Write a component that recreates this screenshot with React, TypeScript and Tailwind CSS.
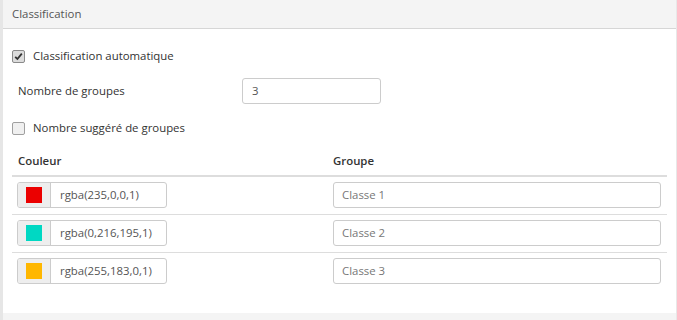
import React from "react";

const font = { fontFamily: '"Segoe UI", "Open Sans", "Noto Sans", sans-serif' };

function Check({ checked }: { checked: boolean }) {
  return (
    <div
      className={
        "w-[13px] h-[13px] rounded-[2px] border flex items-center justify-center " +
        (checked ? "border-[#8a8a8a] bg-[#dcdcdc]" : "border-[#a0a0a0] bg-[#f0f0f0]")
      }
    >
      {checked && (
        <svg width="9" height="9" viewBox="0 0 9 9">
          <path d="M1.2 4.8 L3.4 7 L7.8 1.6" fill="none" stroke="#333" strokeWidth="1.8" />
        </svg>
      )}
    </div>
  );
}

const rows = [
  { c: "rgba(235,0,0,1)", bg: "bg-[#eb0000]", g: "Classe 1" },
  { c: "rgba(0,216,195,1)", bg: "bg-[#00d8c3]", g: "Classe 2" },
  { c: "rgba(255,183,0,1)", bg: "bg-[#ffb700]", g: "Classe 3" },
];

export default function App() {
  return (
    <div className="w-[677px] h-[320px] bg-white flex text-[11.4px] text-[#333]" style={font}>
      <div className="w-[3px] bg-[#e6e6e6]" />
      <div className="flex-1 flex flex-col border-r border-[#e8e8e8]">
        <div className="h-[29px] bg-[#f4f4f4] border-b border-[#d6d6d6] pl-[9px] flex items-center text-[#555]">
          Classification
        </div>
        <div className="pl-[9px] pr-[8px] pt-[17px] flex-1">
          <div className="h-[20px] flex items-center gap-[8px]">
            <Check checked />
            <span>Classification automatique</span>
          </div>
          <div className="mt-[12px] h-[26px] flex items-center">
            <span className="pl-[6px] w-[230px]">Nombre de groupes</span>
            <div className="w-[139px] h-[26px] border border-[#ccc] rounded-[3px] flex items-center pl-[9px] text-[#555]">
              3
            </div>
          </div>
          <div className="mt-[14px] h-[20px] flex items-center gap-[8px]">
            <Check checked={false} />
            <span>Nombre suggéré de groupes</span>
          </div>
          <div className="mt-[13px] w-[655px]">
            <div className="flex h-[26px] pb-[5px] items-center border-b-2 border-[#ddd] font-semibold">
              <div className="w-[316px] pl-[6px]">Couleur</div>
              <div className="flex-1 pl-[5px]">Groupe</div>
            </div>
            {rows.map((r, i) => (
              <div
                key={i}
                className={"flex pt-[5px] pb-[6px] " + (i < rows.length - 1 ? "border-b border-[#ddd]" : "")}
              >
                <div className="w-[316px] pl-[5px]">
                  <div className="w-[150px] h-[26px] border border-[#ccc] rounded-[3px] flex overflow-hidden">
                    <div className="w-[33px] bg-[#eee] border-r border-[#ccc] flex items-center pl-[8px]">
                      <div className={"w-[16px] h-[16px] " + r.bg} />
                    </div>
                    <div className="flex-1 flex items-center pl-[9px] text-[#555]">{r.c}</div>
                  </div>
                </div>
                <div className="flex-1 pl-[5px] pr-[6px]">
                  <div className="h-[26px] border border-[#ccc] rounded-[3px] flex items-center pl-[8px] text-[#777]">
                    {r.g}
                  </div>
                </div>
              </div>
            ))}
          </div>
        </div>
        <div className="h-[7px] bg-[#f4f4f4]" />
      </div>
    </div>
  );
}
